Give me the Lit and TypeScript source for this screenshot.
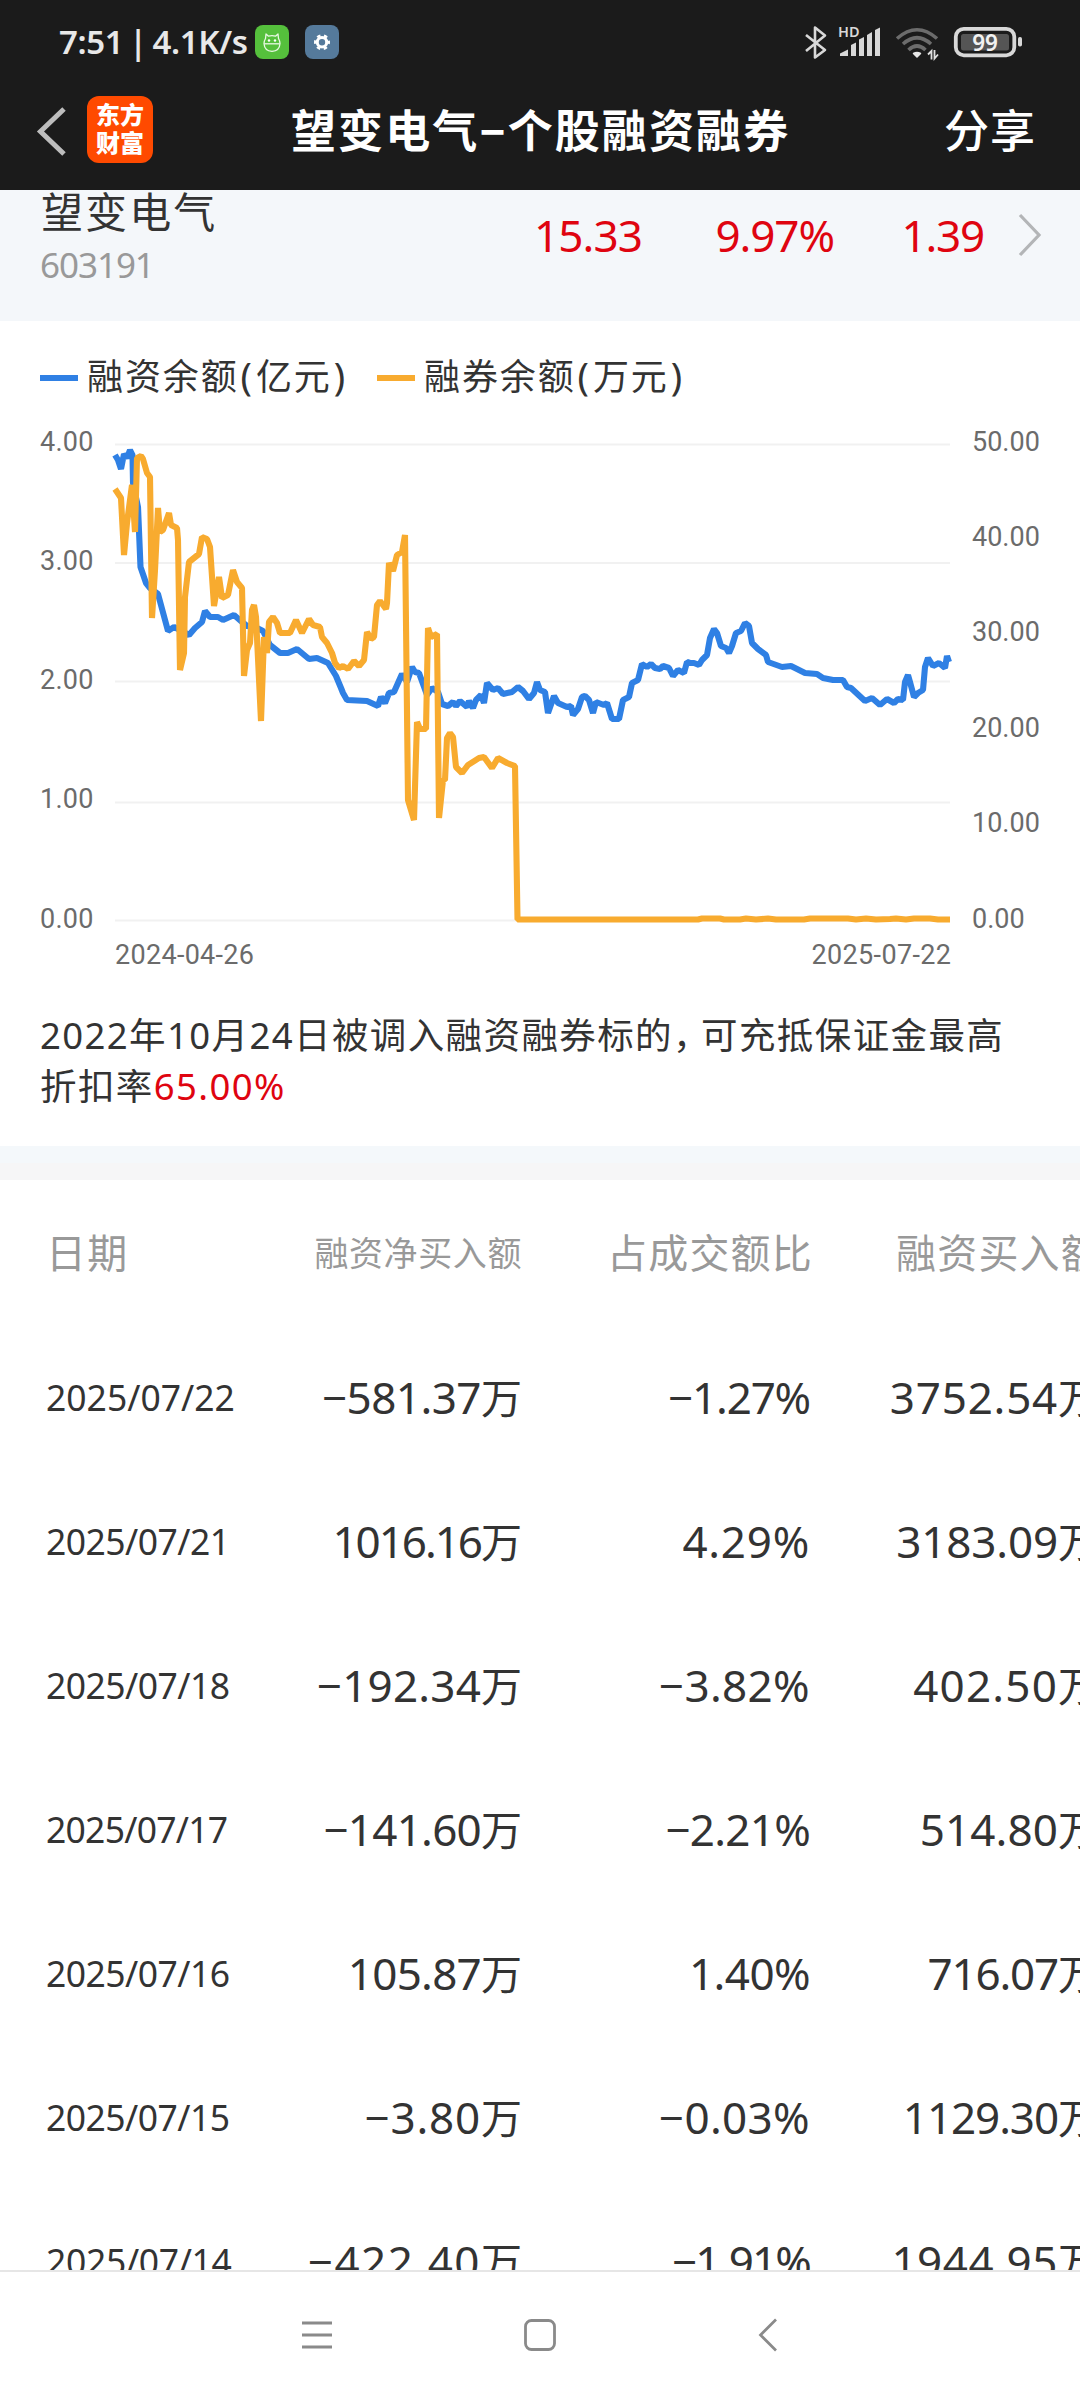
import { LitElement, html, svg, css } from "lit";
import { customElement, property } from "lit/decorators.js";
import { styleMap } from "lit/directives/style-map.js";

interface Row {
  date: string;
  net: string;
  ratio: string;
  buy: string;
}

const ROWS: Row[] = [
  { date: "2025/07/22", net: "−581.37", ratio: "−1.27%", buy: "3752.54" },
  { date: "2025/07/21", net: "1016.16", ratio: "4.29%", buy: "3183.09" },
  { date: "2025/07/18", net: "−192.34", ratio: "−3.82%", buy: "402.50" },
  { date: "2025/07/17", net: "−141.60", ratio: "−2.21%", buy: "514.80" },
  { date: "2025/07/16", net: "105.87", ratio: "1.40%", buy: "716.07" },
  { date: "2025/07/15", net: "−3.80", ratio: "−0.03%", buy: "1129.30" },
  { date: "2025/07/14", net: "−422.40", ratio: "−1.91%", buy: "1944.95" },
];

const FINANCING =
  "115,455 118,460 121,469 124,454 127,458 130,450 132.5,455 133,483 138,507 140.5,567 146,583 150,588 158,594 168,631 174,627 180,630 189,635 195,628 202,622 205,611 210,617 218,617 223,620 234,615 242,622 247,626 255,627 263,631 270,645 280,653 288,653 297,649 309,659 317,658 328,663 336,676 341,688 343,693 347,700 367,701 378,706 381,697 385,703 389,693 394,692 402,674 407,682 412,667 415,672 419,673 427,695 432,688 438,692 442,704 448,706 453,702 456,706 460,701 467,707 469,701 473,708 476,700 481,695 484,703 487,683 493,690 498,688 503,694 512,692 518,687 523,691 529,699 534,693 537,682 540,690 545,692 548,713 554,696 558,703 567,707 571,706 573,715 578,709 582,697 585,696 589,700 593,713 596,702 604,705 607,703 612,719 619,719 623,700 629,697 632,683 638,680 642,664 647,667 651,664 655,668 660,669 663,666 669,668 673,676 678,670 684,673 687,662 690,663 694,663 699,665 702,660 707,655 710,638 714,629 717,633 721,646 726,648 729,653 732,646 736,633 741,631 745,623 749,626 752,643 758,649 766,655 768,662 782,667 791,666 805,673 817,674 823,678 833,680 843,680 847,687 851,688 865,701 872,698 880,705 887,699 894,703 898,699 903,700 905,682 908,675 910,682 914,697 918,693 923,690 925,667 928,658 933,666 939,663 945,668 947,656 949,662";

const LENDING =
  "115,489 121,498 124,555 127,523 132,485 135,532 137,458 141,456 143,459 147,473 150,477 152,618 155,570 158,508 160,532 163,530 169,513 171,525 177,528 178,540 180,670 184,653 185,597 189,562 199,554 202,537 207,539 210,547 214,606 219,577 222,598 228,595 233,570 237,582 242,588 244,676 247,650 250,643 252,610 254,605 256,617 261,721 264,637 267,653 269,622 273,617 277,623 280,633 290,633 296,620 302,633 309,619 313,625 320,627 322,637 327,643 332,653 335,663 339,668 343,666 348,669 354,661 359,666 364,660 367,632 371,639 374,637 377,605 380,601 386,609 387,603 389,563 393,571 397,555 402,552 405,535 408,800 414,820 417,722 420,729 426,729 428,628 431,637 437,634 439,818 443,780 445,780 447,738 450,733 453,737 456,767 462,773 468,765 479,758 484,757 492,768 498,758 507,763 515,766 517.5,919.5 698,919.5 702,918.5 720,918.5 724,919.5 740,919.5 746,918.5 756,919.5 768,918.5 776,919.5 804,919.5 810,918.5 848,918.5 856,919.5 866,918.5 876,919.5 890,919 896,918.5 906,919.5 914,918.5 930,918.5 938,919.5 950,919.5";

const GRID = [444.5, 563, 681.5, 802.5, 920.5];
const LEFT = ["4.00", "3.00", "2.00", "1.00", "0.00"];
const RIGHT = ["50.00", "40.00", "30.00", "20.00", "10.00", "0.00"];

const ADVANCE: Record<string, number> = { "1": -0.15, "7": -0.06, "4": 0.055, "%": -0.06 };
const figures = (s: string, base = 0.018) => {
  const sum = [...s].reduce((n, c) => n + base + (ADVANCE[c] ?? 0), 0);
  return styleMap({ letterSpacing: `${(sum / s.length).toFixed(4)}em` });
};

const base = css`
  :host {
    display: block;
    font-family: "Noto Sans", "Noto Sans CJK SC", sans-serif;
    color: #333;
  }
  * {
    box-sizing: border-box;
  }
  svg {
    display: block;
    flex: none;
  }
`;

@customElement("status-bar")
class StatusBar extends LitElement {
  static styles = [
    base,
    css`
      .bar {
        height: 84px;
        display: flex;
        align-items: center;
        padding: 0 56px 0 59px;
      }
      .clock {
        width: 196px;
        font-size: 33px;
        font-weight: 600;
        letter-spacing: -0.4px;
        word-spacing: -2.4px;
        color: #e8e8e8;
        white-space: pre;
        line-height: 40px;
      }
      .apps {
        display: flex;
        gap: 16px;
        flex: 1;
      }
    `,
  ];
  render() {
    return html`<div class="bar">
      <div class="clock">7:51 | 4.1K/s</div>
      <div class="apps">
        <svg width="34" height="34" viewBox="0 0 34 34">
          <rect width="34" height="34" rx="8" fill="#55c03c" />
          <g fill="none" stroke="#e9f8e4" stroke-width="1.3" stroke-linejoin="round">
            <path d="M10.5 13.500 L11 9 L13.5 11.200 Q17 10 20.5 11.200 L23 9 L23.5 13.500 Q25 16 25 18.500 Q24.500 26 17 26.300 Q9.500 26 9 18.500 Q9 16 10.500 13.500 Z" />
            <path d="M9.200 18.800 H24.800" />
          </g>
          <circle cx="14" cy="15.500" r="1.200" fill="#fff" /><circle cx="20" cy="15.500" r="1.200" fill="#fff" />
        </svg>
        <svg width="34" height="34" viewBox="0 0 34 34">
          <rect width="34" height="34" rx="8" fill="#557a9b" />
          <circle cx="17" cy="17.200" r="6.700" fill="none" stroke="#fff" stroke-width="2.600" stroke-dasharray="3.500 3.516" stroke-dashoffset="1.750" />
          <circle cx="17" cy="17.200" r="4.700" fill="none" stroke="#fff" stroke-width="3" />
        </svg>
      </div>
      <svg width="220" height="40" viewBox="804 22 220 40">
        <path d="M806 35 L825 50 L815 57.500 V27.500 L825 35.500 L806 51" fill="none" stroke="#d8d8d8" stroke-width="2.600" stroke-linejoin="round" />
        <text x="838" y="37" font-family="Noto Sans, sans-serif" font-size="14.500" font-weight="600" fill="#d8d8d8">HD</text>
        <g fill="#d8d8d8">
          <path d="M840 56 V53.500 L848 49.500 V56 Z" />
          <path d="M851 56 V45 L856 42.500 V56 Z" />
          <path d="M859 56 V39.500 L864 37 V56 Z" />
          <path d="M867 56 V35 L872 32 V56 Z" />
          <path d="M875 56 V30 L880 27.500 V56 Z" />
        </g>
        <g fill="none" stroke="#6c6c6c" stroke-width="3.600">
          <path d="M897 38.500 Q917 21 937 38.500" />
          <path d="M903 44 Q917 31.500 931 44" />
          <path d="M908.500 50 Q917 42 925.500 50" />
        </g>
        <path d="M913.500 53.500 Q917 51.500 920.500 53.500 L917 57 Z" fill="#e6e6e6" stroke="#e6e6e6" stroke-width="1.500" stroke-linejoin="round" />
        <path d="M928 54.500 L931.500 51 V59.500 M938 54.500 L934.500 58.500 V50" fill="none" stroke="#e0e0e0" stroke-width="1.800" />
        <rect x="955.800" y="28.800" width="58.500" height="26.500" rx="8" fill="none" stroke="#d8d8d8" stroke-width="3.800" />
        <rect x="961" y="34" width="48" height="16.500" rx="2.500" fill="#555" />
        <rect x="1018" y="37" width="4" height="9.500" rx="1.800" fill="#d8d8d8" />
        <text x="985" y="50.500" text-anchor="middle" font-family="Noto Sans, sans-serif" font-size="22.500" font-weight="600" fill="#f2f2f2">99</text>
      </svg>
    </div>`;
  }
}

@customElement("title-bar")
class TitleBar extends LitElement {
  static styles = [
    base,
    css`
      .bar {
        height: 106px;
        display: flex;
        align-items: flex-start;
        padding: 12px 44px 0 36px;
        color: #fff;
      }
      .back {
        margin-top: 10px;
      }
      .logo {
        margin-left: 19px;
        width: 66px;
        height: 67px;
        border-radius: 12px;
        background: #ff4a00;
        font-size: 24px;
        font-weight: 900;
        line-height: 28px;
        text-align: center;
        padding-top: 5px;
        white-space: nowrap;
      }
      .title {
        flex: 1;
        font-size: 45px;
        font-weight: 700;
        letter-spacing: 2.1px;
        line-height: 60px;
        margin-top: 5px;
        padding-left: 138px;
        white-space: nowrap;
      }
      .share {
        font-size: 45px;
        font-weight: 500;
        letter-spacing: 1px;
        line-height: 60px;
        margin-top: 5px;
        white-space: nowrap;
      }
    `,
  ];
  render() {
    return html`<div class="bar">
      <svg class="back" width="32" height="50" viewBox="0 0 32 50">
        <path d="M28 3 L4.500 25.500 L28 48" fill="none" stroke="#bdbdbd" stroke-width="5" />
      </svg>
      <div class="logo">东方<br />财富</div>
      <div class="title">望变电气−个股融资融券</div>
      <div class="share">分享</div>
    </div>`;
  }
}

@customElement("stock-strip")
class StockStrip extends LitElement {
  static styles = [
    base,
    css`
      .strip {
        height: 131px;
        background: #f4f7fa;
        display: grid;
        grid-template-columns: 400px 202px 192px 150px 56px;
        padding-left: 40px;
      }
      .name {
        font-size: 42px;
        letter-spacing: 2.1px;
        line-height: 50px;
        margin-top: -3px;
        padding-left: 1px;
      }
      .code {
        font-size: 35px;
        line-height: 50px;
        margin-top: 3px;
        color: #999;
      }
      .num {
        font-size: 44px;
        line-height: 60px;
        margin-top: 15px;
        text-align: right;
        color: #df0410;
        white-space: nowrap;
      }
      .arrow {
        margin: 23px 0 0 34px;
      }
    `,
  ];
  render() {
    return html`<div class="strip">
      <div>
        <div class="name">望变电气</div>
        <div class="code" style=${figures("603191", 0.02)}>603191</div>
      </div>
      <div class="num" style=${figures("15.33", 0.01)}>15.33</div>
      <div class="num" style=${figures("9.97%", 0)}>9.97%</div>
      <div class="num" style=${figures("1.39", 0.01)}>1.39</div>
      <svg class="arrow" width="24" height="44" viewBox="0 0 24 44">
        <path d="M2 2 L21 22 L2 42" fill="none" stroke="#b3b5b7" stroke-width="3.200" />
      </svg>
    </div>`;
  }
}

@customElement("balance-chart")
class BalanceChart extends LitElement {
  static styles = [
    base,
    css`
      .legend {
        display: flex;
        align-items: center;
        height: 50px;
        margin-top: 32px;
        padding-left: 40px;
        font-size: 36px;
        letter-spacing: 1.9px;
        line-height: 46px;
        white-space: nowrap;
      }
      .key {
        width: 38px;
        height: 6px;
        flex: none;
        margin-top: -1px;
      }
      .blue {
        background: #2f80e4;
      }
      .orange {
        background: #f8ab2f;
      }
      .label {
        padding-left: 9px;
        width: 299px;
        margin-top: -4px;
      }
      .p {
        font-size: 38px;
        padding: 0 2px;
      }
      .axis {
        font-family: Roboto, sans-serif;
        font-size: 27px;
      }
    `,
  ];
  render() {
    return html`
      <div class="legend">
        <span class="key blue"></span>
        <span class="label">融资余额<span class="p">(</span>亿元<span class="p">)</span></span>
        <span class="key orange"></span>
        <span class="label">融券余额<span class="p">(</span>万元<span class="p">)</span></span>
      </div>
      <svg width="1080" height="577" viewBox="0 403 1080 577">
        ${GRID.map((y) => svg`<line x1="115" x2="950" y1=${y} y2=${y} stroke="#f1f1f1" stroke-width="2" />`)}
        <g class="axis" fill="#6b6b6b">
          ${LEFT.map((t, i) => svg`<text x="40" y=${450.5 + i * 119.3} textLength="53.500">${t}</text>`)}
          ${RIGHT.map((t, i) => svg`<text x="972" y=${450.5 + i * 95.4}>${t}</text>`)}
          <text x="115" y="963.500" textLength="139">2024-04-26</text>
          <text x="811.500" y="963.500" textLength="139.500">2025-07-22</text>
        </g>
        <polyline points=${FINANCING} fill="none" stroke="#2f80e4" stroke-width="6.100" stroke-linejoin="bevel" />
        <polyline points=${LENDING} fill="none" stroke="#f8ab2f" stroke-width="6.100" stroke-linejoin="bevel" />
      </svg>
    `;
  }
}

@customElement("margin-table")
class MarginTable extends LitElement {
  @property({ attribute: false }) rows: Row[] = [];
  static styles = [
    base,
    css`
      :host {
        overflow: hidden;
      }
      .row {
        display: grid;
        grid-template-columns: 190px 286px 288px 289px;
        padding-left: 46px;
        height: 144px;
        line-height: 60px;
        align-items: center;
        text-align: right;
        white-space: nowrap;
      }
      .head {
        height: 145px;
        color: #999;
        font-size: 40px;
        letter-spacing: 1.2px;
      }
      .head > .wide {
        margin-right: -3px;
      }
      .first {
        text-align: left;
      }
      .small {
        font-size: 34px;
        letter-spacing: 0.6px;
      }
      .date {
        font-size: 35.5px;
      }
      .value {
        font-size: 44px;
      }
      .unit {
        font-size: 41px;
      }
    `,
  ];
  render() {
    return html`
      <div class="row head">
        <div class="first">日期</div>
        <div class="small">融资净买入额</div>
        <div class="wide">占成交额比</div>
        <div class="wide">融资买入额</div>
      </div>
      ${this.rows.map(
        (r) => html`<div class="row">
          <div class="first date" style=${figures(r.date, 0.006)}>${r.date}</div>
          <div class="value"><span style=${figures(r.net)}>${r.net}</span><span class="unit">万</span></div>
          <div class="value" style=${figures(r.ratio)}>${r.ratio}</div>
          <div class="value"><span style=${figures(r.buy)}>${r.buy}</span><span class="unit">万</span></div>
        </div>`,
      )}
    `;
  }
}

@customElement("nav-keys")
class NavKeys extends LitElement {
  static styles = [
    base,
    css`
      .bar {
        height: 130px;
        border-top: 2px solid #e6e6e6;
        background: #fff;
        display: flex;
        align-items: center;
        padding: 0 0 2px 300px;
      }
      .home {
        margin: 0 201px 0 189px;
      }
    `,
  ];
  render() {
    return html`<div class="bar">
      <svg width="34" height="34" viewBox="0 0 34 34">
        <path d="M2 5 H32 M2 17 H32 M2 29 H32" stroke="#8a8a8a" stroke-width="2.800" />
      </svg>
      <svg class="home" width="34" height="34" viewBox="0 0 34 34">
        <rect x="2.500" y="2.500" width="29" height="29" rx="6" fill="none" stroke="#8a8a8a" stroke-width="2.800" />
      </svg>
      <svg width="20" height="34" viewBox="0 0 20 34">
        <path d="M18 1.500 L2.500 17 L18 32.500" fill="none" stroke="#8a8a8a" stroke-width="2.700" />
      </svg>
    </div>`;
  }
}

@customElement("app-root")
class AppRoot extends LitElement {
  static styles = [
    base,
    css`
      :host {
        width: 1080px;
        height: 2400px;
        overflow: hidden;
        background: #fff;
      }
      .page {
        height: 2400px;
        display: flex;
        flex-direction: column;
      }
      .top {
        background: #1b1b1b;
        height: 190px;
        flex: none;
      }
      .note {
        height: 166px;
        flex: none;
        padding: 30px 0 0 40px;
        font-size: 36.5px;
        letter-spacing: 1.4px;
        line-height: 51px;
        white-space: nowrap;
      }
      .comma {
        letter-spacing: -8.5px;
      }
      .rate {
        color: #df0410;
        letter-spacing: 1.4px;
      }
      .gap {
        height: 34px;
        flex: none;
        background: linear-gradient(#f4f8fb 50%, #f6f6f7 50%);
      }
      .table {
        flex: 1;
        min-height: 0;
      }
    `,
  ];
  render() {
    return html`<div class="page">
      <div class="top">
        <status-bar></status-bar>
        <title-bar></title-bar>
      </div>
      <stock-strip></stock-strip>
      <balance-chart></balance-chart>
      <div class="note">
        2022年10月24日被调入融资融券标的<span class="comma">，</span>可充抵保证金最高<br />折扣率<span class="rate">65.00%</span>
      </div>
      <div class="gap"></div>
      <margin-table class="table" .rows=${ROWS}></margin-table>
      <nav-keys></nav-keys>
    </div>`;
  }
}
